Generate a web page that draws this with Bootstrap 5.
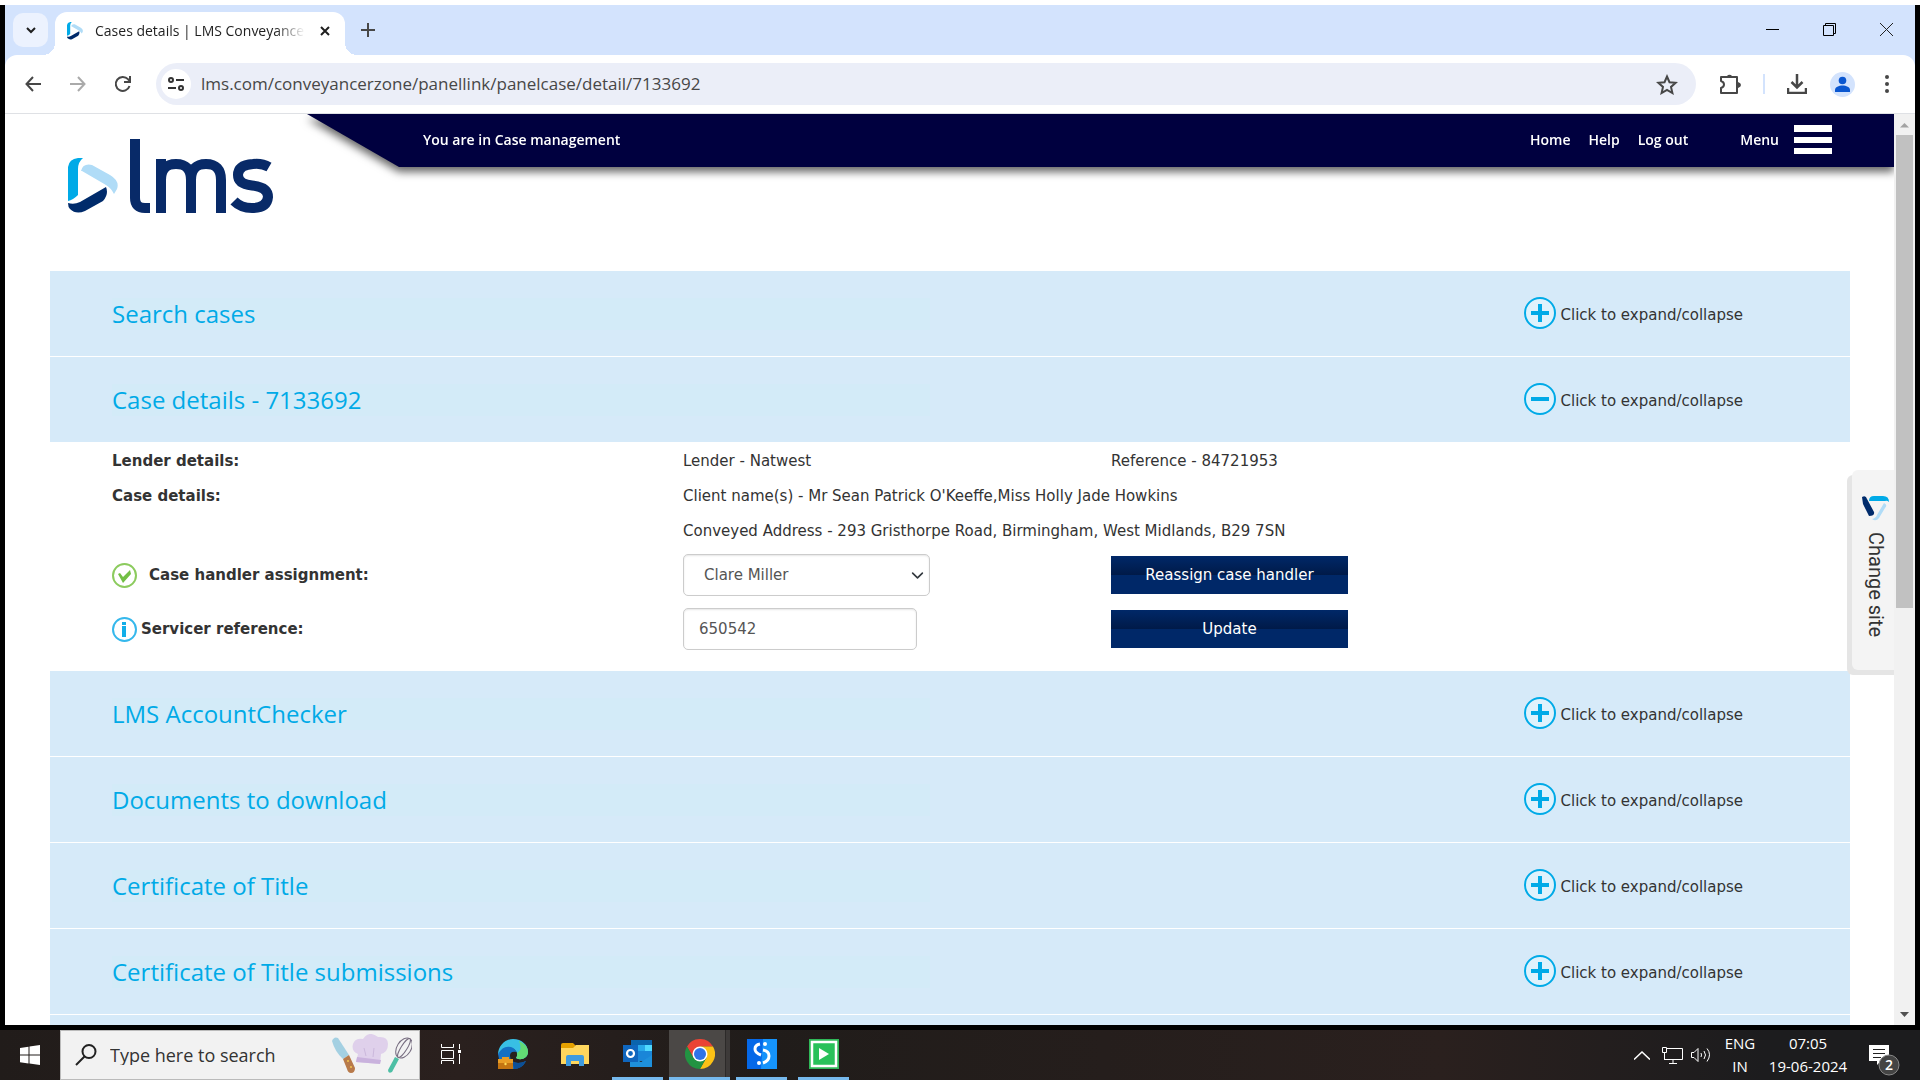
<!DOCTYPE html>
<html lang="en">
<head>
<meta charset="utf-8">
<meta name="viewport" content="width=device-width, initial-scale=1">
<title>Cases details | LMS Conveyancer Zone</title>
<link href="https://cdn.jsdelivr.net/npm/bootstrap@5.3.0/dist/css/bootstrap.min.css" rel="stylesheet">
<style>
:root { --navy:#00003f; --brand:#00aae7; --pale:#d6eaf9; --ui:"Open Sans","Noto Sans",sans-serif; --body:"DejaVu Sans",Verdana,sans-serif; }
html, body { height:100%; }
body { font-family:var(--body); font-size:15px; line-height:20px; color:#333; background:#000; overflow:hidden; }
a { color:inherit; text-decoration:none; }
svg { display:block; flex:none; }
.ui-btn { border:0; background:none; padding:0; color:inherit; display:flex; align-items:center; justify-content:center; flex:none; }
.screen { border-top:5px solid #fff; }
.browser { margin:0 5px 5px; background:#d3e3fd; min-height:0; }
.tabstrip { flex:none; height:50px; font-family:var(--ui); padding-left:8px; }
.tab-search { width:35px; height:34px; margin:8px 7px 8px 0; border-radius:10px; background:#ecf2fe; }
.chrome-tab { width:290px; height:43px; margin-top:7px; padding:0 15px 6px 12px; background:#fff; border-radius:12px 12px 0 0; font-size:14px; color:#1f1f1f; position:relative; }
.chrome-tab::before, .chrome-tab::after { content:""; position:absolute; bottom:0; width:12px; height:12px; }
.chrome-tab::before { left:-12px; background:radial-gradient(circle at 0 0, transparent 12px, #fff 12px); }
.chrome-tab::after { right:-12px; background:radial-gradient(circle at 100% 0, transparent 12px, #fff 12px); }
.tab-name { width:210px; margin-left:12px; overflow:hidden; white-space:nowrap; -webkit-mask-image:linear-gradient(90deg,#000 86%,transparent); mask-image:linear-gradient(90deg,#000 86%,transparent); }
.win-btn { width:57px; height:48px; }
.toolbar { flex:none; height:59px; background:#fff; border-radius:12px 12px 0 0; border-bottom:1px solid #dfe1e5; color:#474747; padding:0 26px 0 16px; }
.nav-icon { width:24px; margin-right:21px; }
.omnibox { height:42px; border-radius:21px; background:#ebeef8; padding:0 18px 0 5px; margin-right:23px; min-width:0; font-family:var(--ui); font-size:17px; }
.site-info { width:30px; height:30px; border-radius:15px; background:#fff; }
.omnibox input { border:0; background:none; padding:0; margin-left:10px; color:#474747; outline:0; min-width:0; }
.tool-rule { width:2px; height:20px; background:#d3e3fd; margin:0 22px; }
.profile { margin:0 30px 0 23px; }
.viewport { flex:1 1 0; background:#fff; overflow:hidden; min-height:0; }
.site { overflow:hidden; position:relative; min-width:0; }
.site-head { height:157px; }
.logo { margin:24px 0 0 63px; }
.ribbon { margin-left:33px; height:53px; filter:drop-shadow(0 5px 4px rgba(0,0,0,.6)); }
.ribbon-in { height:53px; background:var(--navy); clip-path:polygon(0 0,100% 0,100% 100%,92px 100%); padding:0 62px 2px 116px; color:#fff; font-family:"Open Sans",sans-serif; font-size:14px; font-weight:600; }
.site-nav { gap:18px; }
.menu-link { margin-left:52px; }
.burger { width:38px; height:29px; border-top:7px solid #fff; border-bottom:6px solid #fff; margin-left:15px; display:flex; align-items:center; }
.burger::before { content:""; width:100%; height:6px; background:#fff; }
.panels { margin:0 44px 0 45px; }
.panel-bar { height:86px; border-bottom:1px solid #fff; background:var(--pale); padding:0 107px 0 62px; }
.panel-bar.open { height:85px; border-bottom:0; }
.panel-bar h2 { font-family:"Open Sans",sans-serif; font-size:24px; line-height:32px; color:var(--brand); font-weight:400; margin:0; background:#d3ebf8; width:818px; }
.toggle { color:#333; font-size:15px; }
.toggle svg { margin-bottom:2px; }
.toggle span { margin-left:5px; margin-top:3px; }
.case { padding:1px 62px 15px; }
.case-row { display:grid; grid-template-columns:571px 428px 1fr; align-items:center; min-height:35px; }
.case-row.field-row { min-height:54px; }
.case-row label, .case-row b { font-weight:700; }
.wide-cell { grid-column:2 / 4; }
.case .form-select, .case .form-control { height:42px; border:1px solid #ccc; border-radius:5px; box-shadow:inset 0 1px 2px rgba(0,0,0,.1); font-size:15px; color:#555; background-color:#fff; }
.case .form-select { width:247px; padding:0 30px 0 20px; background-size:13px 13px; background-position:right 5px center; }
.case .form-control { width:234px; padding:0 15px; }
.case .btn { width:237px; height:38px; border-radius:0; border:0; color:#fff; font-size:15px; padding:0; background:linear-gradient(#002868 0,#001a48 50%,#002868 50%,#002868 100%); }
.change-site { position:absolute; right:0; top:356px; width:42px; height:200px; background:#f4f4f4; border-radius:6px 0 0 6px; box-shadow:-5px 5px 0 #e5e5e5, 0 5px 0 #e5e5e5; border:0; padding:26px 0 0 5px; font-family:Roboto,sans-serif; font-size:20px; color:#333; display:flex; flex-direction:column; align-items:center; }
.change-site span { writing-mode:vertical-rl; margin-top:11px; line-height:24px; }
.scroller { width:21px; background:#f1f1f1; padding:8px 2px 7px; }
.thumb { width:17px; height:473px; background:#c1c1c1; margin-top:7px; }
.taskbar { flex:none; height:50px; background:linear-gradient(90deg,#211c1a,#2a201e 24%,#201c1a 40%,#2a201e 75%,#1c1c1e 92%); color:#fff; font-family:var(--ui); }
.start { width:60px; }
.search { width:360px; background:#f2f2f2; border:1px solid #bbb; padding:0 7px 0 14px; }
.search input { border:0; background:none; outline:0; min-width:0; padding:0; margin-left:13px; color:#333; font-size:18px; }
.search input::placeholder { color:#333; opacity:1; }
.task { width:62px; height:50px; border-bottom:3px solid transparent; }
.task.running { width:51px; margin:0 5px 0 6px; border-color:#76b9ed; }
.task.active { width:61px; margin:0 0 0 1px; background:linear-gradient(90deg,#4b4846 56px,#2c2a29 56px,#2c2a29 57px,#3d3a39 57px); }
.tray { font-size:15px; line-height:23px; text-align:center; padding-right:20px; }
.lang { width:32px; margin-left:12px; }
.clock { width:80px; margin-left:12px; white-space:nowrap; }
.notes { margin:10px 0 0 21px; }
</style>
</head>
<body>
<svg width="0" height="0" class="position-absolute">
<defs>
<symbol id="tri" viewBox="0 0 50 56"><path d="M0 42V9Q1 1 10 0h5Q10 4 10 11v26Q5 42 0 43Z" fill="#00aae7"/><path d="M13 13Q15 5 24 7L42 17Q52 23 49 31L46 36Q43 30 38 27L14 13Z" fill="#b0dcf7"/><path d="M0 45Q6 47 12 44L38 29Q41 36 35 43L17 53Q8 57 2 51Q0 49 0 45Z" fill="#002b6b"/></symbol>
<symbol id="plus" viewBox="0 0 32 32"><circle cx="16" cy="16" r="15" fill="#dff2fc" stroke="#00aae7" stroke-width="2"/><path d="M7 16h18M16 7v18" stroke="#00aae7" stroke-width="4"/></symbol>
<symbol id="minus" viewBox="0 0 32 32"><circle cx="16" cy="16" r="15" fill="#dff2fc" stroke="#00aae7" stroke-width="2"/><path d="M7 16h18" stroke="#00aae7" stroke-width="4"/></symbol>
</defs>
</svg>
<div class="screen vh-100 d-flex flex-column">
  <div class="browser flex-grow-1 d-flex flex-column">
    <div class="tabstrip d-flex">
      <button class="ui-btn tab-search" aria-label="Search tabs"><svg width="12" height="12" viewBox="0 0 12 12"><path d="M2 4l4 4 4-4" fill="none" stroke="#1f1f1f" stroke-width="2"/></svg></button>
      <div class="chrome-tab d-flex align-items-center">
        <svg width="16" height="18"><use href="#tri"/></svg>
        <div class="tab-name">Cases details | LMS Conveyance</div>
        <button class="ui-btn ms-auto" aria-label="Close tab"><svg width="10" height="10" viewBox="0 0 10 10"><path d="M1 1l8 8M9 1L1 9" stroke="#1f1f1f" stroke-width="2"/></svg></button>
      </div>
      <button class="ui-btn ms-3 pe-1" aria-label="New tab"><svg width="14" height="14" viewBox="0 0 14 14"><path d="M7 0v14M0 7h14" stroke="#474747" stroke-width="2"/></svg></button>
      <div class="ms-auto d-flex">
        <button class="ui-btn win-btn" aria-label="Minimize"><svg width="13" height="13"><path d="M0 6.500h13" stroke="#000"/></svg></button>
        <button class="ui-btn win-btn" aria-label="Restore"><svg width="13" height="13" viewBox="0 0 13 13" fill="none" stroke="#000"><path d="M.5 2.500h10v10H.5zM2.500 2V.5h10v10H11"/></svg></button>
        <button class="ui-btn win-btn" aria-label="Close"><svg width="13" height="13" viewBox="0 0 13 13"><path d="M0 0l13 13M13 0L0 13" stroke="#222"/></svg></button>
      </div>
    </div>
    <div class="toolbar d-flex align-items-center">
      <button class="ui-btn nav-icon" aria-label="Back"><svg width="16" height="16" viewBox="0 0 16 16" fill="none" stroke="#474747" stroke-width="2"><path d="M16 8H2M8 1L1.500 8 8 15"/></svg></button>
      <button class="ui-btn nav-icon" aria-label="Forward"><svg width="16" height="16" viewBox="0 0 16 16" fill="none" stroke="#aaa" stroke-width="2"><path d="M0 8h14M8 1l6.500 7L8 15"/></svg></button>
      <button class="ui-btn nav-icon" aria-label="Reload"><svg width="18" height="18" viewBox="0 0 18 18" fill="none" stroke="#474747" stroke-width="2"><path d="M15.500 11A7 7 0 1 1 14 4.200L16 6M16 1v6h-6"/></svg></button>
      <div class="omnibox flex-grow-1 d-flex align-items-center">
        <button class="ui-btn site-info" aria-label="Site information"><svg width="16" height="14" viewBox="0 0 16 14" fill="none" stroke="#333" stroke-width="2"><circle cx="3" cy="3" r="2"/><path d="M8 3h8M0 11h8"/><circle cx="13" cy="11" r="2"/></svg></button>
        <input class="flex-grow-1" aria-label="Address" value="lms.com/conveyancerzone/panellink/panelcase/detail/7133692">
        <button class="ui-btn" aria-label="Bookmark"><svg width="22" height="21" viewBox="0 0 22 21"><path d="M11 2.500l2.500 5.700 6.200.6-4.700 4.100 1.400 6.100L11 15.800 5.600 19 7 12.900 2.300 8.800l6.200-.6z" fill="none" stroke="#474747" stroke-width="2"/></svg></button>
      </div>
      <button class="ui-btn" aria-label="Extensions"><svg width="22" height="22" viewBox="0 0 22 22"><path d="M2 4h16v16H2v-5q3-1 3-3.500T2 8z" fill="none" stroke="#474747" stroke-width="2" stroke-linejoin="round"/><path d="M8 3a3 3 0 0 1 5 0zM19 9q3 1 3 3t-3 3z" fill="#474747"/></svg></button>
      <div class="tool-rule"></div>
      <button class="ui-btn" aria-label="Downloads"><svg width="20" height="20" viewBox="0 0 20 20" fill="none" stroke="#474747" stroke-width="2.500"><path d="M10 0v13M4.500 8l5.500 5.500L15.500 8M1 14v5h18v-5"/></svg></button>
      <button class="ui-btn profile" aria-label="Profile"><svg width="25" height="25" viewBox="0 0 25 25"><circle cx="12.500" cy="12.500" r="12.500" fill="#d3e3fd"/><circle cx="12.500" cy="8.500" r="3.800" fill="#0b57d0"/><path d="M5 20v-2c0-6 15-6 15 0v2z" fill="#0b57d0"/></svg></button>
      <button class="ui-btn" aria-label="Chrome menu"><svg width="4" height="18" viewBox="0 0 4 18" fill="#474747"><circle cx="2" cy="2" r="2"/><circle cx="2" cy="9" r="2"/><circle cx="2" cy="16" r="2"/></svg></button>
    </div>
    <div class="viewport d-flex">
      <div class="site flex-grow-1">
        <header class="site-head d-flex">
          <a href="#" class="logo" aria-label="LMS home"><svg width="206" height="76" viewBox="0 0 206 76"><svg x="0" y="20" width="50" height="56"><use href="#tri"/></svg><g fill="none" stroke="#082a68" stroke-width="10"><path d="M67 1v59q0 10 10 10h5"/><path d="M93 75V21M93 42q0-16 15-16t15 16v33M123 42q0-16 15-16t15 16v33"/><path d="M201 29Q194 25 185 26 170 27 170 37 170 46 184 47.500 200 49 200 59 199 70 184 70 173 70 166 63"/></g></svg></a>
          <div class="ribbon flex-grow-1"><div class="ribbon-in d-flex align-items-center">
            <span>You are in Case management</span>
            <nav class="site-nav ms-auto d-flex" aria-label="Site"><a href="#">Home</a><a href="#">Help</a><a href="#">Log out</a></nav>
            <a href="#" class="menu-link d-flex align-items-center">Menu<i class="burger"></i></a>
          </div></div>
        </header>
        <main class="panels">
          <section class="panel-bar d-flex align-items-center justify-content-between"><h2>Search cases</h2><button class="ui-btn toggle"><svg width="32" height="32"><use href="#plus"/></svg><span>Click to expand/collapse</span></button></section>
          <section class="panel-bar open d-flex align-items-center justify-content-between"><h2>Case details - 7133692</h2><button class="ui-btn toggle"><svg width="32" height="32"><use href="#minus"/></svg><span>Click to expand/collapse</span></button></section>
          <form class="case">
            <div class="case-row"><b>Lender details:</b><span>Lender - Natwest</span><span>Reference - 84721953</span></div>
            <div class="case-row"><b>Case details:</b><span class="wide-cell">Client name(s) - Mr Sean Patrick O'Keeffe,Miss Holly Jade Howkins</span></div>
            <div class="case-row"><span class="wide-cell">Conveyed Address - 293 Gristhorpe Road, Birmingham, West Midlands, B29 7SN</span></div>
            <div class="case-row field-row">
              <div class="d-flex align-items-center"><svg width="25" height="25" viewBox="0 0 25 25"><circle cx="12.500" cy="12.500" r="11.500" fill="#fff" stroke="#8ccb5e" stroke-width="2"/><path d="M6 11l2-1 3 4 7-7 1 4-8 9z" fill="#72bf44"/></svg><label for="handler" class="ms-2 ps-1">Case handler assignment:</label></div>
              <select id="handler" class="form-select"><option>Clare Miller</option></select>
              <button type="button" class="btn">Reassign case handler</button>
            </div>
            <div class="case-row field-row">
              <div class="d-flex align-items-center"><svg width="25" height="25" viewBox="0 0 25 25"><circle cx="12.500" cy="12.500" r="11.500" fill="#fff" stroke="#35b8ec" stroke-width="2"/><path d="M10 5h4v3h-4zM10 9h4v11h-4z" fill="#12aee8"/></svg><label for="servicer" class="ms-1">Servicer reference:</label></div>
              <input id="servicer" class="form-control" value="650542">
              <button type="button" class="btn">Update</button>
            </div>
          </form>
          <section class="panel-bar d-flex align-items-center justify-content-between"><h2>LMS AccountChecker</h2><button class="ui-btn toggle"><svg width="32" height="32"><use href="#plus"/></svg><span>Click to expand/collapse</span></button></section>
          <section class="panel-bar d-flex align-items-center justify-content-between"><h2>Documents to download</h2><button class="ui-btn toggle"><svg width="32" height="32"><use href="#plus"/></svg><span>Click to expand/collapse</span></button></section>
          <section class="panel-bar d-flex align-items-center justify-content-between"><h2>Certificate of Title</h2><button class="ui-btn toggle"><svg width="32" height="32"><use href="#plus"/></svg><span>Click to expand/collapse</span></button></section>
          <section class="panel-bar d-flex align-items-center justify-content-between"><h2>Certificate of Title submissions</h2><button class="ui-btn toggle"><svg width="32" height="32"><use href="#plus"/></svg><span>Click to expand/collapse</span></button></section>
          <section class="panel-bar"></section>
        </main>
        <button class="change-site"><svg width="27" height="25" viewBox="0 0 27 25"><path d="M7 5q0-5 5-5h9q6 0 6 6-2-2-4-1z" fill="#00aae7"/><path d="M0 1q4-2 5 2l7 13q1 4-5 4L1 8z" fill="#002b6b"/><path d="M22 7q4 2 1 5l-6 10q-3 4-7 1 4-1 5-4z" fill="#b0dcf7"/></svg><span>Change site</span></button>
      </div>
      <div class="scroller d-flex flex-column align-items-center"><svg width="9" height="6"><path d="M0 5.500L4.500 1 9 5.500z" fill="#a3a3a3"/></svg><div class="thumb"></div><svg class="mt-auto" width="9" height="6"><path d="M0 0h9L4.500 5z" fill="#505050"/></svg></div>
    </div>
  </div>
  <footer class="taskbar d-flex">
    <button class="ui-btn start" aria-label="Start"><svg width="20" height="20" viewBox="0 0 20 20" fill="#fff"><path d="M0 3l8.500-1.300V9.500H0zM9.500 1.500L20 0v9.500H9.500zM0 10.500h8.500v8L0 17.300zM9.500 10.500H20V20L9.500 18.600z"/></svg></button>
    <div class="search d-flex align-items-center"><svg width="22" height="22" viewBox="0 0 22 22" fill="none" stroke="#222" stroke-width="2"><circle cx="14" cy="7.500" r="6.500"/><path d="M9.500 12.500L1 21"/></svg><input class="flex-grow-1" placeholder="Type here to search" aria-label="Search"><svg width="80" height="42" viewBox="0 0 80 42"><path d="M0 7q2-5 6-3l11 17-6 4Q3 18 0 7z" fill="#a4d0e2"/><path d="M11 25l6-4 6 13q0 5-4 5-3 0-4-4z" fill="#b87a4a"/><circle cx="16" cy="27" r="1" fill="#f3c64e"/><circle cx="19" cy="33" r="1" fill="#f3c64e"/><path d="M24 28l2-8q-7-3-5-10 2-6 10-5 6-9 15-2 10-1 10 7 0 8-7 10l-1 10z" fill="#dfd0eb"/><path d="M24 28l1-5 24 3-1 4z" fill="#c9b2dd"/><path d="M32 14l2 8M42 14l-1 9" stroke="#cbb8dc" fill="none"/><path d="M56 36l7-13 4 2-7 13q-4 2-4-2z" fill="#4dbfa5"/><g fill="none" stroke="#776d80"><ellipse cx="72" cy="14" rx="7" ry="11" transform="rotate(32 72 14)"/><ellipse cx="72" cy="14" rx="3" ry="11" transform="rotate(32 72 14)"/></g></svg></div>
    <button class="ui-btn task" aria-label="Task view"><svg width="20" height="20" viewBox="0 0 20 20" fill="none" stroke="#fff" stroke-width="1"><path d="M.5 0v3.500h12V0M.5 6.500h12v8H.5zM.5 20v-3.500h12V20M18.500 0v5M18.500 10v10"/><path d="M17 6h3v3h-3z" fill="#fff" stroke="none"/></svg></button>
    <button class="ui-btn task" aria-label="Edge"><svg width="30" height="30" viewBox="0 0 30 30"><path d="M0 16C0 6 8 0 15 0c9 0 15 6 15 13 0 6-7 9-12 6q3-5-2-9-9-3-16 6z" fill="#38bfe4"/><path d="M21 2q9 4 9 11c0 6-7 9-12 6q2-2 1-5 6-3 2-12z" fill="#62dc74"/><path d="M0 15Q5 6 13 8q5 2 5 5-6-1-6 4 0 7 8 7 4 0 8-2-4 8-13 8Q1 29 0 15z" fill="#1470c4"/><path d="M14 22q6 4 14 0-4 8-12 8z" fill="#0c4f96"/><rect y="20" width="15" height="10" fill="#c57511"/><path d="M0 20h15v4H0zM4 20v-2h7v2" fill="#e99d25"/><circle cx="7.500" cy="25" r="1.200" fill="#ffdc55"/></svg></button>
    <button class="ui-btn task" aria-label="File Explorer"><svg width="28" height="24" viewBox="0 0 28 24"><path d="M0 3q0-2 2-2h10l3 3v6H0z" fill="#e5a100"/><path d="M0 6h12l3-3h13v19H0z" fill="#ffd75e"/><path d="M5 24V15q0-2 2-2h14q2 0 2 2v9h-5v-5h-8v5z" fill="#3e9be0"/></svg></button>
    <button class="ui-btn task running" aria-label="Outlook"><svg width="30" height="28" viewBox="0 0 30 28"><path d="M8 0h21v5H8z" fill="#0a64ad"/><path d="M8 5h14v14H8z" fill="#1272c4"/><path d="M15 5h7v6h-7z" fill="#28a8ea"/><path d="M22 5h7v6h-7z" fill="#50d9ff"/><path d="M15 11h14v10H15z" fill="#1a86d8"/><path d="M7 16l11 6 11-7v12H7z" fill="#1e90dc"/><path d="M0 5h15v17H0z" fill="#0f66be"/><circle cx="7.500" cy="13.500" r="3.500" fill="none" stroke="#fff" stroke-width="2.200"/></svg></button>
    <button class="ui-btn task running active" aria-label="Chrome"><svg width="30" height="30" viewBox="0 0 30 30"><path d="M2 7.500A15 15 0 0 1 28 7.500H15L8.500 19z" fill="#ea4335"/><path d="M28 7.500A15 15 0 0 1 15 30l6.500-11.500L15 7.500z" fill="#fbc116"/><path d="M15 30A15 15 0 0 1 2 7.500l6.500 11.200 13 0z" fill="#229342"/><circle cx="15" cy="15" r="7.500" fill="#fff"/><circle cx="15" cy="15" r="6" fill="#2f73e8"/></svg></button>
    <button class="ui-btn task running" aria-label="S app"><svg width="30" height="30" viewBox="0 0 30 30"><path d="M0 0h30v30H0z" fill="#0568e8"/><path d="M16 0h14v30H14z" fill="#1593fb"/><g fill="none" stroke="#fff" stroke-width="3"><path d="M13 5q-5 1-5 5t6 6M16 11q6 1 6 6t-6 7"/></g><circle cx="18" cy="5" r="2" fill="#fff"/><circle cx="12" cy="24" r="2" fill="#fff"/></svg></button>
    <button class="ui-btn task running" aria-label="Player"><svg width="30" height="30" viewBox="0 0 30 30"><path d="M0 0h30v30H0z" fill="#2fb858"/><path d="M3 3h24v24H3z" fill="#29c15a" stroke="#fff" stroke-width="2.500"/><path d="M10 9l10 6-10 6z" fill="#fff"/></svg></button>
    <div class="tray ms-auto d-flex align-items-center">
      <svg width="16" height="9" viewBox="0 0 16 9" fill="none" stroke="#fff" stroke-width="1.500"><path d="M0 8.500L8 1l8 7.500"/></svg>
      <svg class="ms-2 ps-1" width="25" height="17" viewBox="0 0 21 17" fill="none" stroke="#fff"><path d="M5 1.500h15.500v11H3M.5.5h4v5h-4zM2.500 6v7M11 13v3M7 16.500h8"/></svg>
      <svg class="ms-2" width="21" height="18" viewBox="0 0 21 18" fill="none" stroke="#fff"><path d="M.5 6.500H3l4-4v13l-4-4H.5zM10 7q1 2 0 4M13 5q3 4 0 8M16 2.500q5 6 0 13"/></svg>
      <div class="lang">ENG<br>IN</div>
      <div class="clock">07:05<br>19-06-2024</div>
      <svg class="notes" width="31" height="31" viewBox="0 0 31 31"><path d="M0 0h20v16h-8l-4 4v-4H0z" fill="#fff"/><path d="M4 4.500h12M4 8.500h12M4 12.500h8" stroke="#222"/><circle cx="20" cy="20" r="10" fill="#444" stroke="#888"/><text x="20" y="25" text-anchor="middle" fill="#fff" font-size="14" font-weight="600">2</text></svg>
    </div>
  </footer>
</div>
<script src="https://cdn.jsdelivr.net/npm/bootstrap@5.3.0/dist/js/bootstrap.bundle.min.js"></script>
</body>
</html>
